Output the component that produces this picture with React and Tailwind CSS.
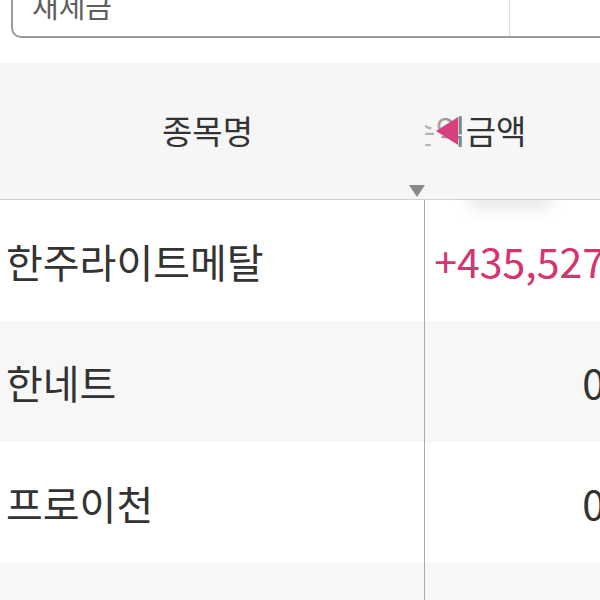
const ROWS = [
  { name: '한주라이트메탈', value: '+435,527', up: true },
  { name: '한네트', value: '0' },
  { name: '프로이천', value: '0' },
  { name: '', value: '' },
]

const FONT = { fontFamily: '"Noto Sans CJK KR", "Noto Sans", sans-serif' }

export default function App() {
  return (
    <div className="w-[600px] h-[600px] overflow-hidden bg-white" style={FONT}>

      {/* 검색 입력창 (위가 잘림) */}
      <div className="flex w-[640px] h-[82px] -mt-[44px] ml-[11px] border-2 border-[#9a9a9a] rounded-b-[10px]">
        <div className="w-[497px] flex items-end justify-between pl-[19px] pr-[84px] pb-[16px] border-r border-[#dcdcdc]">
          <span className="text-[29px] leading-none text-[#5e5e5e]">재제금</span>
          <svg width="10" height="14" viewBox="0 0 10 14" className="mb-[18px]">
            <path d="M9 0 L4 11" stroke="#333" strokeWidth="2" fill="none" strokeLinecap="round" />
          </svg>
        </div>
        <div className="flex-1" />
      </div>

      {/* 헤더 */}
      <div className="mt-[25px] w-[615px] h-[137px] flex bg-[#f6f6f6] border-b border-[#cfcfcf]">
        <div className="relative w-[425px] flex items-center justify-center pr-[10px]">
          <span className="text-[33px] text-[#333]">종목명</span>
          <svg width="16" height="12" viewBox="0 0 16 12" className="absolute right-0 bottom-[2px]">
            <path d="M0 0 H16 L8 12 Z" fill="#8a8a8a" />
          </svg>
        </div>
        <div className="relative flex-1 flex items-center overflow-hidden">
          <span className="-ml-[20px] text-[33px] text-[#333] whitespace-nowrap">손익금액</span>
          <div className="absolute left-0 top-0 bottom-0 w-[36px] bg-gradient-to-r from-[#f6f6f6]/70 to-[#f6f6f6]/40" />
          <svg width="22" height="28" viewBox="0 0 22 28" className="absolute left-[11px] top-[54px]">
            <path d="M22 0 V28 L0 14 Z" fill="#d63f80" />
          </svg>
        </div>
      </div>

      {/* 목록 */}
      <div className="w-[615px] flex flex-col">
        {ROWS.map((r, i) => (
          <div key={i}
            className={`relative flex h-[121px] shrink-0 overflow-hidden ${i % 2 === 1 ? 'bg-[#f7f7f7]' : 'bg-white'}`}>
            {i === 0 && (
              <div className="absolute left-[468px] -top-[12px] w-[84px] h-[20px] rounded-full bg-black/10 blur-[8px]" />
            )}
            <div className="w-[425px] flex items-center pl-[6px] border-r border-[#ababab]">
              <span className="text-[40px] text-[#333]">{r.name}</span>
            </div>
            <div className="flex-1 flex items-center justify-end pr-[10px]">
              <span className={`text-[41px] ${r.up ? 'text-[#d6336f]' : 'text-[#333]'}`}>{r.value}</span>
            </div>
          </div>
        ))}
      </div>
    </div>
  )
}
